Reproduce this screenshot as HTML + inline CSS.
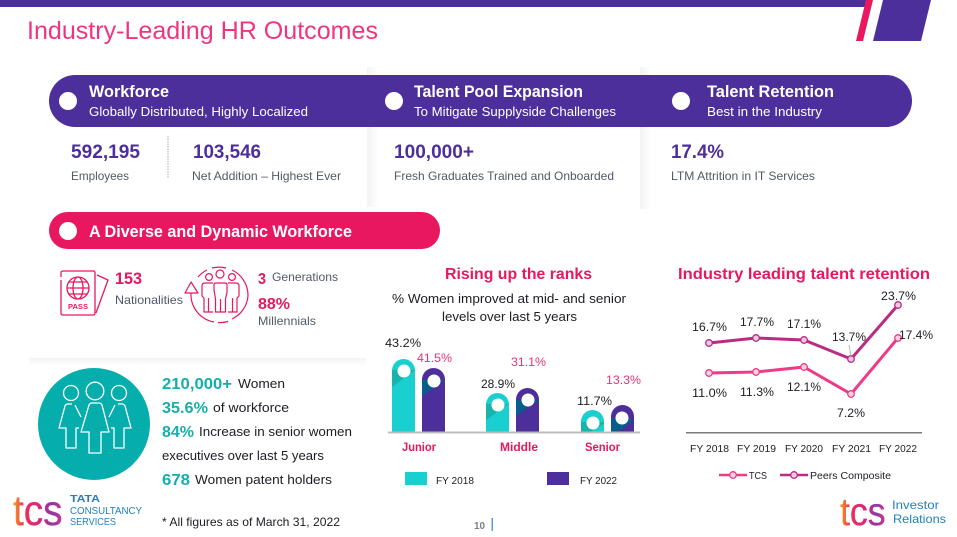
<!DOCTYPE html>
<html><head><meta charset="utf-8"><title>Industry-Leading HR Outcomes</title>
<style>
html,body{margin:0;padding:0;background:#fff;width:957px;height:537px;overflow:hidden}
svg{display:block}
text{font-family:"Liberation Sans",sans-serif}
.b{font-weight:700}
.w{fill:#fff}.p{fill:#4d2f9c}.g{fill:#505968}.k{fill:#e8175f}.d{fill:#1c1c24}.t{fill:#14afad}.m{fill:#ee2f78}
.bl{fill:#1f80c2}
</style></head><body>
<svg width="957" height="537" viewBox="0 0 957 537" xmlns="http://www.w3.org/2000/svg">
<defs>
<linearGradient id="sr" x1="0" x2="1" y1="0" y2="0"><stop offset="0" stop-color="#f3f3f3"/><stop offset="1" stop-color="#fff"/></linearGradient>
<linearGradient id="sb" x1="0" x2="0" y1="0" y2="1"><stop offset="0" stop-color="#f3f3f3"/><stop offset="1" stop-color="#fff"/></linearGradient>
<linearGradient id="logo" x1="0" x2="1" y1="0" y2="0"><stop offset="0" stop-color="#f6a21c"/><stop offset=".22" stop-color="#ee2f58"/><stop offset=".55" stop-color="#d8267c"/><stop offset=".8" stop-color="#8a3aa8"/><stop offset="1" stop-color="#d8308a"/></linearGradient>
</defs>
<rect width="957" height="537" fill="#fff"/>
<rect x="0" y="0" width="866" height="7" fill="#4d2f9c"/>
<polygon points="866,0 873,0 863,41 856,41" fill="#e8175f"/>
<polygon points="883,0 931,0 921,41 873,41" fill="#4d2f9c"/>
<text x="27" y="39" font-size="25" fill="#f0357f" textLength="351" lengthAdjust="spacingAndGlyphs">Industry-Leading HR Outcomes</text>

<rect x="367" y="67" width="11" height="140" fill="url(#sr)"/>
<rect x="640" y="67" width="11" height="142" fill="url(#sr)"/>
<rect x="29" y="358" width="337" height="8" fill="url(#sb)"/>

<rect x="49" y="75" width="863" height="52" rx="26" fill="#4d2f9c"/>
<circle cx="68" cy="101" r="9" fill="#fff"/><circle cx="394" cy="101" r="9" fill="#fff"/><circle cx="681" cy="101" r="9" fill="#fff"/>
<text class="w b" x="89" y="97" font-size="17" textLength="80" lengthAdjust="spacingAndGlyphs">Workforce</text>
<text class="w" x="89" y="116" font-size="13" textLength="219" lengthAdjust="spacingAndGlyphs">Globally Distributed, Highly Localized</text>
<text class="w b" x="414" y="97" font-size="17" textLength="169" lengthAdjust="spacingAndGlyphs">Talent Pool Expansion</text>
<text class="w" x="414" y="116" font-size="13" textLength="202" lengthAdjust="spacingAndGlyphs">To Mitigate Supplyside Challenges</text>
<text class="w b" x="707" y="97" font-size="17" textLength="127" lengthAdjust="spacingAndGlyphs">Talent Retention</text>
<text class="w" x="707" y="116" font-size="13" textLength="115" lengthAdjust="spacingAndGlyphs">Best in the Industry</text>

<text class="p b" x="71" y="158" font-size="19" textLength="69" lengthAdjust="spacingAndGlyphs">592,195</text>
<text class="p b" x="193" y="158" font-size="19" textLength="68" lengthAdjust="spacingAndGlyphs">103,546</text>
<text class="p b" x="394" y="158" font-size="19" textLength="80" lengthAdjust="spacingAndGlyphs">100,000+</text>
<text class="p b" x="671" y="158" font-size="19" textLength="53" lengthAdjust="spacingAndGlyphs">17.4%</text>
<text class="g" x="71" y="180" font-size="12" textLength="58" lengthAdjust="spacingAndGlyphs">Employees</text>
<text class="g" x="192" y="180" font-size="12" textLength="149" lengthAdjust="spacingAndGlyphs">Net Addition – Highest Ever</text>
<text class="g" x="394" y="180" font-size="12" textLength="220" lengthAdjust="spacingAndGlyphs">Fresh Graduates Trained and Onboarded</text>
<text class="g" x="671" y="180" font-size="12" textLength="144" lengthAdjust="spacingAndGlyphs">LTM Attrition in IT Services</text>
<line x1="168" y1="136" x2="168" y2="178" stroke="#c9c9c9" stroke-width="1.5" stroke-dasharray="1.5 1"/>

<rect x="49" y="212" width="391" height="37" rx="18.5" fill="#e8175f"/>
<circle cx="68" cy="231" r="9" fill="#fff"/>
<text class="w b" x="89" y="237" font-size="17" textLength="263" lengthAdjust="spacingAndGlyphs">A Diverse and Dynamic Workforce</text>

<!-- passport -->
<g fill="none" stroke="#e8175f" stroke-width="1.3" stroke-linejoin="round">
<path d="M61,277 V273 Q61,271 63,271 H93 Q95,271 95,273 V313 Q95,315 93,315 H63 Q61,315 61,313 V280"/>
<path d="M97,275 L108,280 L96,313"/>
<circle cx="78" cy="288" r="11"/>
<ellipse cx="78" cy="288" rx="5" ry="11"/>
<path d="M67,288 H89 M69,282 H87 M69,294 H87"/>
</g>
<text x="78" y="309" font-size="7" class="k b" text-anchor="middle" textLength="20" lengthAdjust="spacingAndGlyphs">PASS</text>
<text class="k b" x="115" y="284" font-size="17" textLength="27" lengthAdjust="spacingAndGlyphs">153</text>
<text class="g" x="115" y="304" font-size="12" textLength="68" lengthAdjust="spacingAndGlyphs">Nationalities</text>

<!-- generations icon -->
<g fill="none" stroke="#e8175f" stroke-width="1.2" stroke-linejoin="round">
<path d="M191,293 A28,28 0 0 0 214,322" />
<path d="M218,322.5 A28,28 0 0 0 228,321.5" />
<path d="M232,319 A28,28 0 0 0 248,296 A28,28 0 0 0 232,270"/>
<path d="M226,268 A28,28 0 0 0 212,268"/>
<path d="M207,270 A28,28 0 0 0 198,277"/>
<path d="M185,293 L191,282 L198,293 Z"/>
<circle cx="209" cy="277" r="3.4"/><circle cx="220" cy="274" r="4"/><circle cx="232" cy="277" r="3.4"/>
<path d="M214,290 V285 Q214,283 216,283 H225 Q227,283 227,285 V292 L225.5,299 V312 H215.5 V299 Z M220.500,299 V312"/>
<path d="M213,283 H205 Q202,283 202,286 V296 L204,298 V312 H213 M208.500,298 V312"/>
<path d="M228,283 H236 Q239,283 239,286 V296 L237,298 V312 H228 M232.500,298 V312"/>
</g>
<text class="k b" x="258" y="284" font-size="16" textLength="8" lengthAdjust="spacingAndGlyphs">3</text>
<text class="g" x="272" y="281" font-size="12" textLength="66" lengthAdjust="spacingAndGlyphs">Generations</text>
<text class="k b" x="258" y="309" font-size="16" textLength="32" lengthAdjust="spacingAndGlyphs">88%</text>
<text class="g" x="258" y="325" font-size="12" textLength="58" lengthAdjust="spacingAndGlyphs">Millennials</text>

<!-- women -->
<circle cx="94" cy="424" r="56" fill="#05adac"/>
<g fill="none" stroke="#fff" stroke-width="1.3" stroke-linejoin="round">
<circle cx="71" cy="393" r="7.5"/><circle cx="95" cy="391" r="8.8"/><circle cx="119" cy="393" r="7.5"/>
<path d="M89,405 Q90,403 92,403 H99 Q101,403 102,405 L109,432 H101 V453 H89 V432 H81 Z"/>
<path d="M72,404 H68 Q66,404 65,406 L59,428 H66 V448 H76 V428 H79"/>
<path d="M75,405 L81,417"/>
<path d="M118,404 H122 Q124,404 125,406 L131,428 H124 V448 H114 V428 H111"/>
<path d="M115,405 L109,417"/>
</g>
<text class="t b" x="162" y="389" font-size="16" textLength="70" lengthAdjust="spacingAndGlyphs">210,000+</text>
<text class="d" x="238" y="388" font-size="13" textLength="47" lengthAdjust="spacingAndGlyphs">Women</text>
<text class="t b" x="162" y="413" font-size="16" textLength="46" lengthAdjust="spacingAndGlyphs">35.6%</text>
<text class="d" x="213" y="412" font-size="13" textLength="76" lengthAdjust="spacingAndGlyphs">of workforce</text>
<text class="t b" x="162" y="437" font-size="16" textLength="32" lengthAdjust="spacingAndGlyphs">84%</text>
<text class="d" x="199" y="436" font-size="13" textLength="153" lengthAdjust="spacingAndGlyphs">Increase in senior women</text>
<text class="d" x="162" y="460" font-size="13" textLength="162" lengthAdjust="spacingAndGlyphs">executives over last 5 years</text>
<text class="t b" x="162" y="485" font-size="16" textLength="28" lengthAdjust="spacingAndGlyphs">678</text>
<text class="d" x="195" y="484" font-size="13" textLength="137" lengthAdjust="spacingAndGlyphs">Women patent holders</text>
<text class="d" x="162" y="526" font-size="12" textLength="178" lengthAdjust="spacingAndGlyphs">* All figures as of March 31, 2022</text>

<!-- TCS logo -->
<text transform="translate(13,525) scale(1.02,1.12)" x="0" y="0" font-size="38" fill="url(#logo)" stroke="url(#logo)" stroke-width=".3">tcs</text>
<text class="bl b" x="70" y="502" font-size="10" textLength="30" lengthAdjust="spacingAndGlyphs">TATA</text>
<text class="bl" x="70" y="514" font-size="10.5" textLength="72" lengthAdjust="spacingAndGlyphs">CONSULTANCY</text>
<text class="bl" x="70" y="525" font-size="10.5" textLength="46" lengthAdjust="spacingAndGlyphs">SERVICES</text>

<!-- rising chart -->
<text class="k b" x="445" y="279" font-size="16" textLength="147" lengthAdjust="spacingAndGlyphs">Rising up the ranks</text>
<text class="d" x="392" y="303" font-size="12.5" textLength="234" lengthAdjust="spacingAndGlyphs">% Women improved at mid- and senior</text>
<text class="d" x="442" y="321" font-size="12.5" textLength="135" lengthAdjust="spacingAndGlyphs">levels over last 5 years</text>

<g>
<path d="M392,432 V370.5 A11.5,11.5 0 0 1 415,370.5 V432 Z" fill="#19cfd0"/>
<polygon points="392,370 392,387 415,370" fill="#17b3ac"/><circle cx="404" cy="371" r="6.5" fill="#fff"/>
<path d="M422,432 V379.5 A11.5,11.5 0 0 1 445,379.5 V432 Z" fill="#4d2f9c"/>
<polygon points="422,380 422,396 445,380" fill="#0a5c8c"/><circle cx="434" cy="381" r="6.5" fill="#fff"/>
<path d="M486,432 V404.5 A11.5,11.5 0 0 1 509,404.5 V432 Z" fill="#19cfd0"/>
<polygon points="486,404 486,420 509,404" fill="#17b3ac"/><circle cx="498" cy="405" r="6.5" fill="#fff"/>
<path d="M516,432 V399.5 A11.5,11.5 0 0 1 539,399.5 V432 Z" fill="#4d2f9c"/>
<polygon points="516,400 516,416 539,400" fill="#0a5c8c"/><circle cx="528" cy="400" r="6.5" fill="#fff"/>
<path d="M581,432 V421.5 A11.5,11.5 0 0 1 604,421.5 V432 Z" fill="#19cfd0"/>
<polygon points="581,422 581,432 604,432 604,422" fill="#17b3ac"/>
<polygon points="590,432 604,432 604,424" fill="#19cfd0"/><circle cx="593" cy="423" r="6.5" fill="#fff"/>
<path d="M611,432 V416.5 A11.5,11.5 0 0 1 634,416.5 V432 Z" fill="#4d2f9c"/>
<polygon points="611,418 611,432 618,432 634,420" fill="#0a5c8c"/><circle cx="622" cy="418" r="6.5" fill="#fff"/>
</g>
<rect x="388" y="431.5" width="252" height="2" fill="#bdbdbd"/>
<text class="d" x="385" y="347" font-size="12" textLength="36" lengthAdjust="spacingAndGlyphs">43.2%</text>
<text class="m" x="417" y="362" font-size="12" textLength="35" lengthAdjust="spacingAndGlyphs">41.5%</text>
<text class="d" x="481" y="388" font-size="12" textLength="34" lengthAdjust="spacingAndGlyphs">28.9%</text>
<text class="m" x="511" y="366" font-size="12" textLength="35" lengthAdjust="spacingAndGlyphs">31.1%</text>
<text class="d" x="577" y="405" font-size="12" textLength="35" lengthAdjust="spacingAndGlyphs">11.7%</text>
<text class="m" x="606" y="384" font-size="12" textLength="35" lengthAdjust="spacingAndGlyphs">13.3%</text>
<text class="k b" x="402" y="451" font-size="12" textLength="34" lengthAdjust="spacingAndGlyphs">Junior</text>
<text class="k b" x="500" y="451" font-size="12" textLength="38" lengthAdjust="spacingAndGlyphs">Middle</text>
<text class="k b" x="585" y="451" font-size="12" textLength="35" lengthAdjust="spacingAndGlyphs">Senior</text>
<rect x="405" y="472" width="22" height="13" fill="#19cfd0"/>
<text class="d" x="436" y="484" font-size="10.5" textLength="38" lengthAdjust="spacingAndGlyphs">FY 2018</text>
<rect x="547" y="472" width="22" height="13" fill="#4d2f9c"/>
<text class="d" x="580" y="484" font-size="10.5" textLength="37" lengthAdjust="spacingAndGlyphs">FY 2022</text>
<text x="474" y="529" font-size="10.5" fill="#7b8088" class="b" textLength="11" lengthAdjust="spacingAndGlyphs">10</text>
<rect x="491.5" y="518" width="1.5" height="13" fill="#5b9bd5"/>

<!-- retention chart -->
<text class="k b" x="678" y="279" font-size="16" textLength="252" lengthAdjust="spacingAndGlyphs">Industry leading talent retention</text>
<polyline points="709,343 756,338 804,340 851,359 898,305" fill="none" stroke="#b82c84" stroke-width="3" stroke-linejoin="round"/>
<polyline points="709,373 756,372 804,367 851,394 898,338" fill="none" stroke="#ef3a86" stroke-width="3" stroke-linejoin="round"/>
<g fill="#f4c6e0" stroke="#b82c84" stroke-width="1.3">
<circle cx="709" cy="343" r="3.3"/><circle cx="756" cy="338" r="3.3"/><circle cx="804" cy="340" r="3.3"/><circle cx="851" cy="359" r="3.3"/><circle cx="898" cy="305" r="3.3"/>
</g>
<g fill="#fbd0e2" stroke="#ef3a86" stroke-width="1.3">
<circle cx="709" cy="373" r="3.3"/><circle cx="756" cy="372" r="3.3"/><circle cx="804" cy="367" r="3.3"/><circle cx="851" cy="394" r="3.3"/><circle cx="898" cy="338" r="3.3"/>
</g>
<line x1="849" y1="345" x2="851" y2="356" stroke="#aaa" stroke-width=".8"/>
<g class="d" font-size="12">
<text x="692" y="331" textLength="35" lengthAdjust="spacingAndGlyphs">16.7%</text>
<text x="740" y="326" textLength="34" lengthAdjust="spacingAndGlyphs">17.7%</text>
<text x="787" y="328" textLength="34" lengthAdjust="spacingAndGlyphs">17.1%</text>
<text x="832" y="341" textLength="34" lengthAdjust="spacingAndGlyphs">13.7%</text>
<text x="881" y="300" textLength="35" lengthAdjust="spacingAndGlyphs">23.7%</text>
<text x="899" y="339" textLength="34" lengthAdjust="spacingAndGlyphs">17.4%</text>
<text x="692" y="397" textLength="35" lengthAdjust="spacingAndGlyphs">11.0%</text>
<text x="740" y="396" textLength="34" lengthAdjust="spacingAndGlyphs">11.3%</text>
<text x="787" y="391" textLength="34" lengthAdjust="spacingAndGlyphs">12.1%</text>
<text x="837" y="417" textLength="28" lengthAdjust="spacingAndGlyphs">7.2%</text>
</g>
<rect x="686" y="432" width="236" height="1.5" fill="#7a7a7a"/>
<g class="d" font-size="10.5">
<text x="690" y="452" textLength="39" lengthAdjust="spacingAndGlyphs">FY 2018</text>
<text x="737" y="452" textLength="39" lengthAdjust="spacingAndGlyphs">FY 2019</text>
<text x="785" y="452" textLength="38" lengthAdjust="spacingAndGlyphs">FY 2020</text>
<text x="832" y="452" textLength="39" lengthAdjust="spacingAndGlyphs">FY 2021</text>
<text x="879" y="452" textLength="38" lengthAdjust="spacingAndGlyphs">FY 2022</text>
</g>
<line x1="719" y1="475" x2="747" y2="475" stroke="#ef3a86" stroke-width="2.5"/>
<circle cx="733" cy="475" r="3.3" fill="#fbd0e2" stroke="#ef3a86" stroke-width="1.3"/>
<text class="d" x="749" y="479" font-size="10.5" textLength="18" lengthAdjust="spacingAndGlyphs">TCS</text>
<line x1="780" y1="475" x2="808" y2="475" stroke="#b82c84" stroke-width="2.5"/>
<circle cx="794" cy="475" r="3.3" fill="#f4c6e0" stroke="#b82c84" stroke-width="1.3"/>
<text class="d" x="810" y="479" font-size="10.5" textLength="81" lengthAdjust="spacingAndGlyphs">Peers Composite</text>

<!-- Investor Relations logo -->
<text transform="translate(840,525) scale(.94,1.02)" x="0" y="0" font-size="38" fill="url(#logo)" stroke="url(#logo)" stroke-width=".3">tcs</text>
<text class="bl" x="892" y="509" font-size="12" textLength="47" lengthAdjust="spacingAndGlyphs">Investor</text>
<text class="bl" x="893" y="523" font-size="12" textLength="53" lengthAdjust="spacingAndGlyphs">Relations</text>
</svg>
</body></html>
